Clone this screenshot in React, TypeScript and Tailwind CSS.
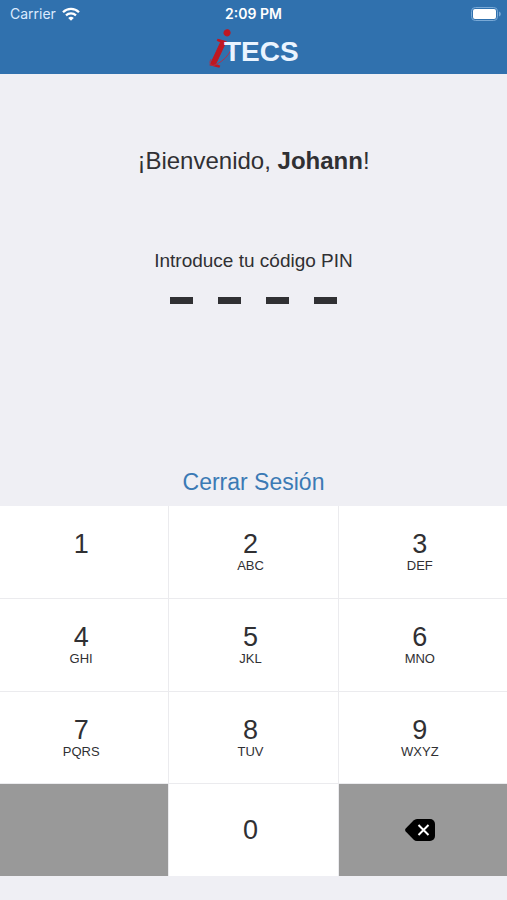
import { useState } from 'react';

const keys = [
    { digit: '1', letters: '' },
    { digit: '2', letters: 'ABC' },
    { digit: '3', letters: 'DEF' },
    { digit: '4', letters: 'GHI' },
    { digit: '5', letters: 'JKL' },
    { digit: '6', letters: 'MNO' },
    { digit: '7', letters: 'PQRS' },
    { digit: '8', letters: 'TUV' },
    { digit: '9', letters: 'WXYZ' },
];

function StatusBar() {
    return (
        <div className="grid grid-cols-3 items-center h-7 px-1.5 font-['Inter',sans-serif] text-sm text-white">
            <div className="flex items-center gap-1.5 pl-1 text-blue-100">
                <span>Carrier</span>
                <svg className="w-[18px] h-[14px]" viewBox="0 0 18 14" fill="none" aria-hidden="true">
                    <path d="M1 5.2a11.4 11.4 0 0 1 16 0" stroke="#fff" strokeWidth="2.3" />
                    <path d="M4 8.4a7.2 7.2 0 0 1 10 0" stroke="#fff" strokeWidth="2.2" />
                    <path d="M9 13.8 6.2 11a4 4 0 0 1 5.6 0z" fill="#fff" />
                </svg>
            </div>
            <span className="text-center font-semibold">2:09 PM</span>
            <svg className="w-[30px] h-[14px] justify-self-end" viewBox="0 0 30 14" aria-hidden="true">
                <rect x="0.5" y="0.5" width="26" height="13" rx="3.8" fill="none" stroke="#79a9d6" />
                <rect x="2" y="2" width="23" height="10" rx="2" fill="#fff" />
                <path d="M28 4.6c2.4.8 2.4 4 0 4.8z" fill="#79a9d6" />
            </svg>
        </div>
    );
}

function Logo() {
    return (
        <svg className="w-[92px] h-[44px] mx-auto overflow-visible" viewBox="0 0 92 44" role="img" aria-label="iTECS">
            <text x="-1" y="36" transform="rotate(15 -1 36)" className="font-['Liberation_Serif',serif] text-[58px] italic" fill="#c01722" stroke="#c01722" strokeWidth="1">i</text>
            <path d="M3 31c-3 6 1 8 6 5 6-3 11-8 14-14" fill="none" stroke="#b3304a" strokeWidth="1" />
            <text x="16" y="33" className="font-['Liberation_Sans',sans-serif] text-[28px] font-bold" fill="#eaf4ff">TECS</text>
        </svg>
    );
}

export default function App() {
    const [pin, setPin] = useState('');

    const addDigit = (digit: string) => setPin((p) => (p.length < 4 ? p + digit : p));

    return (
        <div className="flex flex-col min-h-screen bg-[#efeff4] font-['Liberation_Sans',sans-serif] text-[#303033]">
            <header className="h-[74px] bg-[#3071ae]">
                <StatusBar />
                <Logo />
            </header>

            <main className="flex flex-col flex-1 items-center">
                <h1 className="mt-[71px] text-2xl">
                    ¡Bienvenido, <strong>Johann</strong>!
                </h1>
                <p className="mt-[70px] text-[19px] leading-7">Introduce tu código PIN</p>
                <div className="flex gap-[25px] mt-[22px]" role="status" aria-label="Código PIN">
                    {[0, 1, 2, 3].map((i) => (
                        <span key={i} className={pin.length > i ? 'w-[23px] h-[7px] rounded-full bg-[#3071ae]' : 'w-[23px] h-[7px] bg-[#303033]'} />
                    ))}
                </div>
                <button type="button" onClick={() => setPin('')} className="mt-auto mb-2 text-[23px] leading-8 text-[#3b7ab5]">
                    Cerrar Sesión
                </button>
            </main>

            <section className="grid grid-cols-3 grid-rows-4 gap-px h-[370px] mb-6 bg-[#ebebee]" aria-label="Teclado">
                {keys.map(({ digit, letters }) => (
                    <button key={digit} type="button" onClick={() => addDigit(digit)} className="flex flex-col items-center pt-6 pr-1.5 bg-white">
                        <span className="text-[27px] leading-7">{digit}</span>
                        <span className="text-[13px] leading-4">{letters}</span>
                    </button>
                ))}
                <div className="bg-[#999999]" />
                <button type="button" onClick={() => addDigit('0')} className="pr-1.5 bg-white text-[27px] leading-7">
                    0
                </button>
                <button type="button" onClick={() => setPin(pin.slice(0, -1))} aria-label="Borrar" className="flex items-center justify-center pr-1.5 bg-[#999999]">
                    <svg className="w-[30px] h-[22px]" viewBox="0 0 30 22">
                        <path d="M12 0H25a5 5 0 0 1 5 5v12a5 5 0 0 1-5 5H12Q10 22 8.500 20.500L.7 12.500Q-.5 11 .7 9.500L8.500 1.500Q10 0 12 0z" fill="#000" />
                        <path d="m13.500 6 10 10m0-10-10 10" stroke="#fff" strokeWidth="2" />
                    </svg>
                </button>
            </section>
        </div>
    );
}
